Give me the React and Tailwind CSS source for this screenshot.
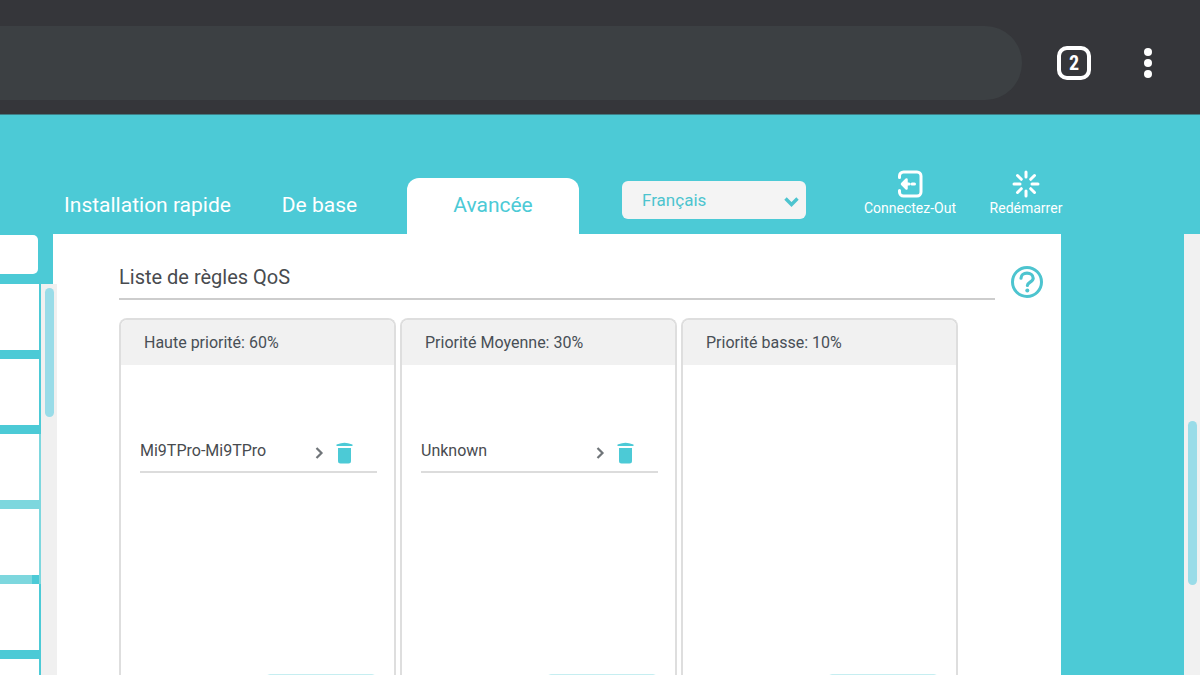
import React from "react";

const columns = [
  { title: "Haute priorité: 60%", devices: ["Mi9TPro-Mi9TPro"], add: true },
  { title: "Priorité Moyenne: 30%", devices: ["Unknown"], add: true },
  { title: "Priorité basse: 10%", devices: [], add: true },
];

const menuItems = [
  "bg-[#4ccad6] border-[#4ccad6]",
  "bg-[#4ccad6] border-[#4ccad6]",
  "bg-[#7dd7de] border-[#7dd7de]",
  "bg-linear-to-r from-[#7dd7de] from-82% to-[#4ccad6] to-82% border-[#7dd7de]",
  "bg-[#4ccad6] border-[#4ccad6]",
  "bg-[#4ccad6] border-[#4ccad6]",
];

function BrowserBar() {
  return (
    <header className="flex h-[115px] shrink-0 items-center border-b border-[#3f7f87] bg-[#35363a] pt-3">
      <input
        type="text"
        aria-label="Adresse"
        className="h-[74px] min-w-0 flex-1 rounded-r-full bg-[#3c4043] outline-none"
      />
      <button
        type="button"
        aria-label="Onglets ouverts"
        className="ml-[35px] flex size-[34px] items-center justify-center rounded-[10px] border-4 border-white"
      >
        <span className="font-['Roboto_Condensed',Roboto,sans-serif] text-xl font-bold leading-5 text-white">2</span>
      </button>
      <button type="button" aria-label="Menu" className="mr-[35px] ml-10 flex w-[34px] justify-center">
        <svg width="10" height="32" viewBox="0 0 10 32" fill="#fff">
          <circle cx="5" cy="5" r="4" />
          <circle cx="5" cy="16" r="4" />
          <circle cx="5" cy="27" r="4" />
        </svg>
      </button>
    </header>
  );
}

function LogoutIcon() {
  return (
    <svg width="26" height="28" viewBox="0 0 26 28" fill="none" stroke="#fff" strokeLinecap="round" strokeLinejoin="round">
      <path d="M2.500 7.500V6a4 4 0 0 1 4-4H20a4 4 0 0 1 4 4v16a4 4 0 0 1-4 4H6.500a4 4 0 0 1-4-4v-1.500" strokeWidth="3" />
      <path d="M9.500 9.500 5 14l4.500 4.500z" fill="#fff" strokeWidth="2.500" />
      <path d="M9 14h3M15 14h2.500" strokeWidth="3" />
    </svg>
  );
}

function RebootIcon() {
  return (
    <svg width="28" height="28" viewBox="0 0 28 28" fill="none" stroke="#fff" strokeWidth="3" strokeLinecap="round">
      <path d="M14 2v5M14 21v5M2 14h6M20 14h6M5.500 5.500l3.800 3.800M18.700 18.700l3.800 3.800M22.500 5.500l-3.800 3.800M9.300 18.700l-3.800 3.800" />
    </svg>
  );
}

function TopNav() {
  return (
    <nav className="flex h-[119px] shrink-0 items-end pl-[39px] text-white">
      <div className="flex h-14 items-stretch text-[21px]">
        <a href="#rapide" className="flex w-[217px] items-center justify-center">Installation rapide</a>
        <a href="#base" className="flex w-[127px] items-center justify-center">De base</a>
        <a href="#avancee" className="ml-6 flex w-[172px] items-center justify-center rounded-t-xl bg-white text-[#4ccad6]">
          Avancée
        </a>
      </div>
      <div className="mb-[15px] ml-[43px] grid w-[184px] items-center">
        <select
          aria-label="Langue"
          className="col-start-1 row-start-1 h-[38px] appearance-none rounded-md bg-[#f4f4f4] px-5 pt-0.5 text-[17px] text-[#4dc4cf] outline-none"
        >
          <option>Français</option>
        </select>
        <svg className="pointer-events-none col-start-1 row-start-1 mt-1 mr-[7px] justify-self-end" width="15" height="10" viewBox="0 0 15 10" fill="none" stroke="#4dc4cf" strokeWidth="3.400">
          <path d="M1.500 1.500l6 6 6-6" />
        </svg>
      </div>
      <div className="mb-4 ml-14 flex gap-[30px] text-sm">
        <button type="button" className="flex w-24 flex-col items-center whitespace-nowrap leading-5">
          <LogoutIcon />
          Connectez-Out
        </button>
        <button type="button" className="flex w-[76px] flex-col items-center whitespace-nowrap leading-5">
          <RebootIcon />
          Redémarrer
        </button>
      </div>
    </nav>
  );
}

function Sidebar() {
  return (
    <aside className="z-10 flex w-[57px] shrink-0 flex-col overflow-hidden">
      <div className="mt-px mb-[10px] h-[39px] w-[38px] shrink-0 rounded-r-[5px] bg-white" />
      <div className="flex min-h-0 flex-1 overflow-hidden">
        <ul className="w-[41px] shrink-0">
          {menuItems.map((tone, i) => (
            <li key={i} className={`h-[75px] border-r-2 pb-[9px] ${tone}`}>
              <div className="h-full bg-white" />
            </li>
          ))}
        </ul>
        <div className="flex-1 bg-[#f0f0f0] pt-1 pl-1">
          <div className="h-[129px] w-[9px] rounded-full bg-[#99dce8]" />
        </div>
      </div>
    </aside>
  );
}

function DeviceRow({ name }) {
  return (
    <li className="flex h-[42px] items-center border-b-2 border-[#dcdcdc] pr-6">
      <span className="flex-1 text-base text-[#484b4f]">{name}</span>
      <button type="button" aria-label={`Déplacer ${name}`} className="mt-1 mr-3">
        <svg width="9" height="12" viewBox="0 0 9 12" fill="none" stroke="#707579" strokeWidth="2.200">
          <path d="M1.500 1l5 5-5 5" />
        </svg>
      </button>
      <button type="button" aria-label={`Supprimer ${name}`} className="mt-1">
        <svg width="17" height="22" viewBox="0 0 17 22" fill="#4ccad6">
          <path d="M.5 2.500 5 1.300Q8.500 0 12 1.300L16.500 2.500V4H.5z" />
          <path d="M2 6h13v13a2.500 2.500 0 0 1-2.500 2.500h-8A2.500 2.500 0 0 1 2 19z" />
        </svg>
      </button>
    </li>
  );
}

function PriorityColumn({ title, devices, add }) {
  return (
    <section className="flex flex-col overflow-hidden rounded-t-lg border-2 border-b-0 border-[#dedede]">
      <h2 className="h-[45px] shrink-0 bg-[#f1f1f1] pl-[23px] text-base leading-[45px] text-[#484f56]">{title}</h2>
      <ul className="mt-[66px] h-[243px] shrink-0 pr-[17px] pl-[19px]">
        {devices.map((name) => (
          <DeviceRow key={name} name={name} />
        ))}
      </ul>
      {add && <button type="button" aria-label="Ajouter" className="mr-[18px] h-10 w-[110px] shrink-0 self-end rounded-sm border border-[#c6eef1]" />}
    </section>
  );
}

function QosPanel() {
  return (
    <main className="-ml-1 flex min-w-0 flex-1 overflow-hidden bg-white pl-[66px]">
      <div className="flex min-w-0 flex-1 flex-col">
        <h1 className="h-[66px] shrink-0 border-b-2 border-[#cdcdcd] pt-7 text-xl leading-[30px] text-[#484b4f]">
          Liste de règles QoS
        </h1>
        <div className="mt-[18px] mr-[37px] grid min-h-0 flex-1 grid-cols-3 gap-1">
          {columns.map((c) => (
            <PriorityColumn key={c.title} {...c} />
          ))}
        </div>
      </div>
      <button type="button" aria-label="Aide" className="mt-8 mr-[18px] ml-4 self-start">
        <svg width="32" height="32" viewBox="0 0 32 32" fill="none" stroke="#4dc4cf" strokeLinecap="round">
          <circle cx="16" cy="16" r="14.500" strokeWidth="3" />
          <path d="M10 12.200c0-3.200 2.700-5 6-5s6.200 1.800 6.200 5c0 3.700-5.800 4-5.800 7.200" strokeWidth="3.200" />
          <circle cx="16.300" cy="24.500" r="2" fill="#4dc4cf" stroke="none" />
        </svg>
      </button>
    </main>
  );
}

export default function App() {
  return (
    <div className="flex h-screen flex-col overflow-hidden bg-[#4ccad6] font-[Roboto,sans-serif]">
      <BrowserBar />
      <TopNav />
      <div className="flex min-h-0 flex-1">
        <Sidebar />
        <QosPanel />
        <div className="ml-[123px] w-4 shrink-0 bg-[#f1f1f1] pt-[187px] pl-1">
          <div className="h-[164px] w-[9px] rounded-full bg-[#99dce8]" />
        </div>
      </div>
    </div>
  );
}
